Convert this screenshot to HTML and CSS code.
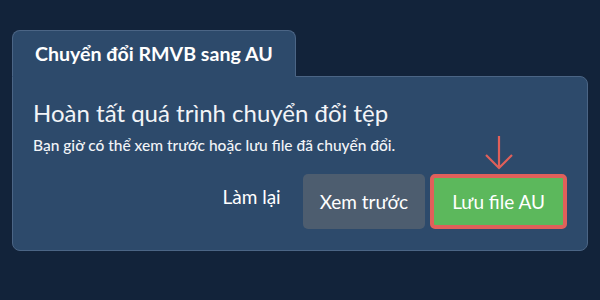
FILE: index.html
```html
<!DOCTYPE html>
<html lang="vi">
<head>
    <meta charset="UTF-8">
    <meta name="viewport" content="width=device-width, initial-scale=1.0">
    <title>Chuyển đổi RMVB sang AU</title>
    <link rel="stylesheet" href="styles.css">
</head>
<body>
    <div class="panel">
        <div class="tab">Chuyển đổi RMVB sang AU</div>
        <div class="card">
            <h1>Hoàn tất quá trình chuyển đổi tệp</h1>
            <p class="lead">Bạn giờ có thể xem trước hoặc lưu file đã chuyển đổi.</p>
            <div class="actions">
                <button class="link-btn">Làm lại</button>
                <button class="btn btn-gray">Xem trước</button>
                <div class="highlight">
                    <svg class="arrow" width="30" height="36" viewBox="0 0 30 36">
                        <path d="M15 1 V33 M2 20 L15 33 L28 20" fill="none" stroke="#e0605a" stroke-width="2.2"/>
                    </svg>
                    <button class="btn btn-green">Lưu file AU</button>
                </div>
            </div>
        </div>
    </div>
</body>
</html>
```

FILE: styles.css
```css
html, body {
    margin: 0;
    height: 100%;
}
body {
    font-family: Lato, "Noto Sans", sans-serif;
    background-color: #12233a;
    color: #f2f4f7;
    padding: 30px 12px 0;
    box-sizing: border-box;
}
.panel {
    display: flex;
    flex-direction: column;
    align-items: flex-start;
}
.tab {
    position: relative;
    z-index: 1;
    background: #2d4a6b;
    border: 1px solid #4b6585;
    border-bottom-color: #2d4a6b;
    border-radius: 8px 8px 0 0;
    margin-bottom: -1px;
    padding: 0 22px 0 22px;
    height: 45px;
    line-height: 45px;
    font-size: 19.6px;
    font-weight: bold;
    color: #fff;
}
.card {
    align-self: stretch;
    background: #2d4a6b;
    border: 1px solid #4b6585;
    border-radius: 0 8px 8px 8px;
    padding: 20px 20px 21px;
}
h1 {
    margin: 0;
    font-size: 24px;
    font-weight: normal;
    line-height: 31px;
}
.lead {
    margin: 8px 0 0;
    font-size: 15.5px;
    font-weight: 500;
}
.actions {
    display: flex;
    justify-content: flex-end;
    align-items: center;
    gap: 5px;
    margin-top: 20px;
}
button {
    font-family: inherit;
    font-size: 19px;
    color: #fff;
    border: none;
    cursor: pointer;
}
.link-btn {
    background: none;
    padding: 0 17px 10px 0;
}
.btn {
    height: 55px;
    border-radius: 5px;
}
.btn-gray {
    background: #4d5d6f;
    padding: 0 17px;
}
.highlight {
    position: relative;
}
.btn-green {
    background: #5cb85c;
    border: 4px solid #e0605a;
    padding: 0 18px;
}
.arrow {
    position: absolute;
    left: 50%;
    bottom: 100%;
    margin-left: -15px;
    margin-bottom: 3px;
}
```
